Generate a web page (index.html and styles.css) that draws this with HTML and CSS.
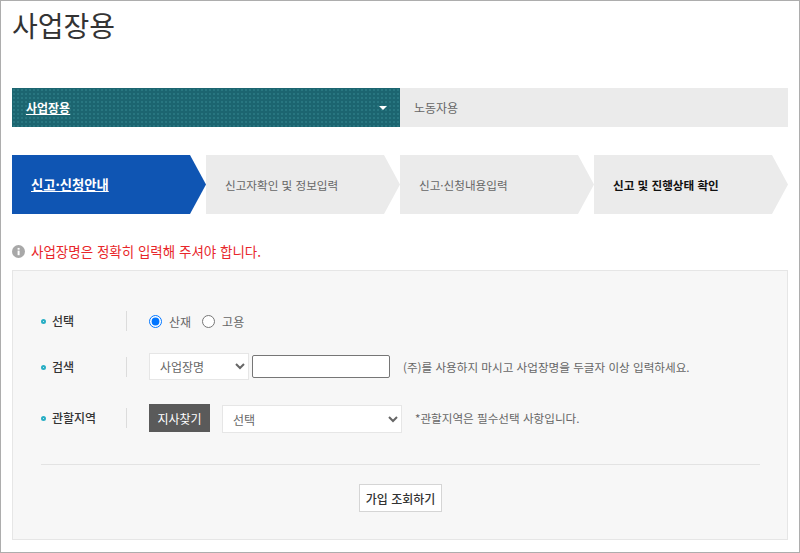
FILE: index.html
```html
<!DOCTYPE html>
<html lang="ko">
<head>
    <meta charset="UTF-8">
    <meta name="viewport" content="width=device-width, initial-scale=1.0">
    <title>사업장용</title>
    <link rel="stylesheet" href="styles.css">
</head>
<body>
    <div class="page">
        <h1 class="page-title">사업장용</h1>

        <div class="tabs">
            <a class="tab tab-active" href="#">
                <span class="tab-label">사업장용</span>
                <span class="tab-arrow"></span>
            </a>
            <a class="tab" href="#">노동자용</a>
        </div>

        <ol class="steps">
            <li class="step step-active"><span>신고·신청안내</span></li>
            <li class="step">신고자확인 및 정보입력</li>
            <li class="step">신고·신청내용입력</li>
            <li class="step step-dark">신고 및 진행상태 확인</li>
        </ol>

        <p class="notice">
            <svg class="notice-icon" viewBox="0 0 13 13" width="13" height="13" aria-hidden="true">
                <circle cx="6.5" cy="6.5" r="6.5" fill="#a8a8a8"/>
                <rect x="5.6" y="5.6" width="2" height="4.6" fill="#fff"/>
                <rect x="5.6" y="2.9" width="2" height="1.8" fill="#fff"/>
            </svg>
            사업장명은 정확히 입력해 주셔야 합니다.
        </p>

        <form class="panel">
            <div class="row row-radio">
                <div class="row-label">선택</div>
                <div class="row-body">
                    <label class="radio"><input type="radio" name="kind" checked> 산재</label>
                    <label class="radio"><input type="radio" name="kind"> 고용</label>
                </div>
            </div>
            <div class="row row-search">
                <div class="row-label">검색</div>
                <div class="row-body">
                    <select class="select select-type">
                        <option>사업장명</option>
                    </select>
                    <input class="text-input" type="text">
                    <span class="hint hint-search">(주)를 사용하지 마시고 사업장명을 두글자 이상 입력하세요.</span>
                </div>
            </div>
            <div class="row row-area">
                <div class="row-label">관할지역</div>
                <div class="row-body">
                    <button class="btn-dark" type="button">지사찾기</button>
                    <select class="select select-area">
                        <option>선택</option>
                    </select>
                    <span class="hint hint-area">*관할지역은 필수선택 사항입니다.</span>
                </div>
            </div>
            <div class="panel-foot">
                <button class="btn-line" type="button">가입 조회하기</button>
            </div>
        </form>
    </div>
</body>
</html>
```

FILE: styles.css
```css
* {
    margin: 0;
    padding: 0;
    box-sizing: border-box;
    font-family: 'Noto Sans CJK KR', 'Noto Sans', sans-serif;
}

body {
    background: #fff;
    overflow: hidden;
}

.page {
    width: 800px;
    height: 553px;
    border: 1px solid #adadad;
    padding: 0 11px;
}

.page-title {
    height: 87px;
    padding-top: 4px;
    font-size: 28px;
    font-weight: 400;
    line-height: 40px;
    color: #333;
}

/* Tabs */
.tabs {
    display: grid;
    grid-template-columns: 1fr 1fr;
    height: 39px;
}

.tab {
    display: flex;
    align-items: center;
    justify-content: space-between;
    padding: 0 14px;
    background: #ebebeb;
    color: #666;
    font-size: 12px;
    text-decoration: none;
}

.tab-active {
    background-color: #1c6570;
    background-image: radial-gradient(circle, #287680 1.2px, transparent 1.5px);
    background-size: 4px 4px;
    color: #fff;
    font-weight: 700;
}

.tab-label {
    text-decoration: underline;
}

.tab-arrow {
    width: 0;
    height: 0;
    margin-right: -1px;
    border-left: 4px solid transparent;
    border-right: 4px solid transparent;
    border-top: 4px solid #fff;
}

/* Steps */
.steps {
    display: grid;
    grid-template-columns: repeat(4, 1fr);
    height: 59px;
    margin-top: 28px;
    list-style: none;
}

.step {
    display: flex;
    align-items: center;
    padding-left: 19px;
    background: #ebebeb;
    color: #666;
    font-size: 11.6px;
    clip-path: polygon(0 0, calc(100% - 16px) 0, 100% 50%, calc(100% - 16px) 100%, 0 100%);
}

.step-active {
    background: #0f55b3;
    color: #fff;
    font-size: 13.3px;
    font-weight: 700;
}

.step-active span {
    text-decoration: underline;
}

.step-dark {
    color: #111;
    font-weight: 700;
}

/* Notice */
.notice {
    display: flex;
    align-items: center;
    gap: 6px;
    height: 20px;
    margin-top: 27px;
    font-size: 13.5px;
    color: #e8262a;
}

.notice-icon {
    flex: none;
}

/* Form panel */
.panel {
    height: 270px;
    margin-top: 9px;
    padding: 0 27px 0 28px;
    background: #f7f7f7;
    border: 1px solid #e6e6e6;
}

.row {
    display: flex;
    align-items: center;
}

.row-radio {
    margin-top: 40px;
    height: 20px;
}

.row-search {
    margin-top: 22px;
    height: 27px;
}

.row-area {
    margin-top: 24px;
    height: 28px;
}

.row-label {
    position: relative;
    width: 86px;
    height: 20px;
    padding-left: 11px;
    border-right: 1px solid #dcdcdc;
    font-size: 12px;
    font-weight: 500;
    line-height: 20px;
    color: #333;
}

.row-label::before {
    content: '';
    position: absolute;
    left: 0;
    top: 8px;
    width: 5px;
    height: 5px;
    box-sizing: border-box;
    border: 2px solid #28aec4;
    border-radius: 50%;
}

.row-body {
    display: flex;
    align-items: center;
    margin-left: 22px;
    font-size: 12px;
    color: #666;
}

.radio {
    display: flex;
    align-items: center;
    gap: 7px;
    margin-right: 11px;
    font-size: 12px;
}

.radio input {
    width: 13px;
    height: 13px;
    margin: 0;
}

.select {
    height: 27px;
    padding-left: 6px;
    background: #fff;
    border: 1px solid #e6e6e6;
    font-size: 12px;
    color: #666;
}

.select-type {
    width: 100px;
}

.select-area {
    width: 180px;
    height: 28px;
    margin-left: 12px;
    margin-top: 2px;
}

.text-input {
    width: 138px;
    height: 23px;
    margin-left: 3px;
    background: #fff;
    border: 1px solid #767676;
    border-radius: 2px;
}

.hint {
    font-size: 11.6px;
    color: #666;
}

.hint-search {
    margin-left: 13px;
}

.hint-area {
    margin-left: 13px;
}

.btn-dark {
    width: 61px;
    height: 28px;
    background: #5a5a5a;
    border: 0;
    color: #fff;
    font-size: 12px;
}

.panel-foot {
    margin-top: 32px;
    padding-top: 19px;
    border-top: 1px solid #e3e3e3;
    text-align: center;
}

.btn-line {
    width: 83px;
    height: 28px;
    background: #fff;
    border: 1px solid #d5d5d5;
    color: #333;
    font-size: 12px;
    font-weight: 500;
}
```
